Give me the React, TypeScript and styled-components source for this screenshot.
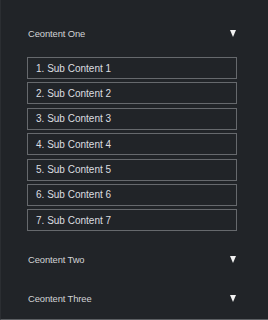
import styled, { createGlobalStyle } from "styled-components";

const GlobalStyle = createGlobalStyle`
  html, body {
    margin: 0;
    padding: 0;
    background-color: #212428;
  }
  * {
    box-sizing: border-box;
  }
`;

const sections = [
  {
    title: "Ceontent One",
    open: true,
    items: [
      "Sub Content 1",
      "Sub Content 2",
      "Sub Content 3",
      "Sub Content 4",
      "Sub Content 5",
      "Sub Content 6",
      "Sub Content 7",
    ],
  },
  { title: "Ceontent Two", open: false, items: [] },
  { title: "Ceontent Three", open: false, items: [] },
];

function App() {
  return (
    <>
      <GlobalStyle />
      <Wrapper>
        {sections.map((section) => (
          <Section key={section.title}>
            <Header>
              <HeaderTitle>{section.title}</HeaderTitle>
              <Arrow />
            </Header>
            {section.open && (
              <SubList>
                {section.items.map((item, i) => (
                  <SubItem key={item}>
                    {i + 1}. {item}
                  </SubItem>
                ))}
              </SubList>
            )}
          </Section>
        ))}
      </Wrapper>
    </>
  );
}

export default App;

const Wrapper = styled.div`
  width: 268px;
  height: 320px;
  padding: 14px 31px 0 27px;
  background-color: #212428;
  border-left: 1px solid #2b2e32;
  border-bottom: 1px solid #5c5f63;
  font-family: "Liberation Sans", Arial, sans-serif;
  overflow: hidden;
`;
const Section = styled.div`
  display: flex;
  flex-direction: column;
`;
const Header = styled.div`
  display: flex;
  justify-content: space-between;
  align-items: center;
  height: 39px;
  padding-right: 1px;
`;
const HeaderTitle = styled.span`
  color: #d2d4d6;
  font-size: 9.4px;
  letter-spacing: -0.1px;
`;
const Arrow = styled.span`
  width: 0;
  height: 0;
  border-left: 3.5px solid transparent;
  border-right: 3.5px solid transparent;
  border-top: 7px solid #f2f2f2;
`;
const SubList = styled.div`
  display: flex;
  flex-direction: column;
  gap: 3.4px;
  margin: 4px 0 9px -1px;
`;
const SubItem = styled.div`
  display: flex;
  align-items: center;
  height: 22px;
  padding-left: 8px;
  border: 1.5px solid #66696d;
  color: #dcdee0;
  font-size: 10px;
`;
